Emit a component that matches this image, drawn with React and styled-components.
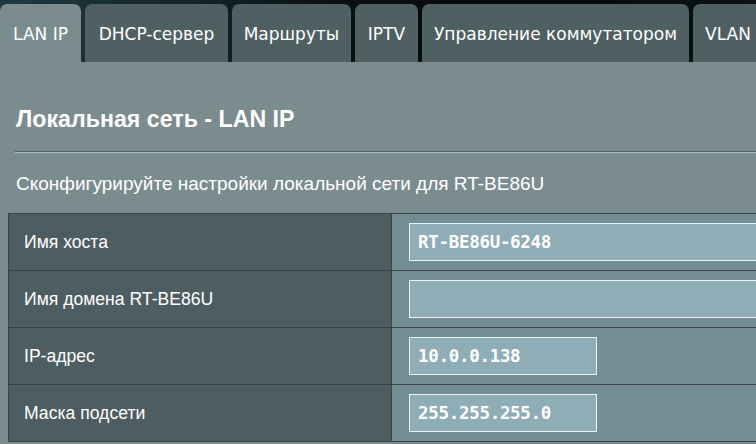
import React from "react";
import styled, { createGlobalStyle } from "styled-components";

const Global = createGlobalStyle`
  html, body { margin: 0; padding: 0; }
  body {
    width: 756px;
    height: 444px;
    overflow: hidden;
    background: #7b8c8f;
    font-family: "Liberation Sans", Arial, sans-serif;
  }
`;

const Page = styled.div`
  width: 756px;
  height: 444px;
  overflow: hidden;
  background: #7b8c8f;
`;

const TabBar = styled.div`
  display: flex;
  gap: 4px;
  padding-top: 4px;
  background: linear-gradient(90deg, #1e3a41 0%, #16292e 20%, #0a1013 45%, #050708 70%, #0c1214 100%);
`;

const Tab = styled.div`
  box-sizing: border-box;
  flex: 0 0 ${(p) => p.$w}px;
  height: 58px;
  display: flex;
  align-items: center;
  justify-content: center;
  border-radius: 7px 7px 0 0;
  background: ${(p) => (p.$active ? "#7b8c8f" : "#4f5f62")};
  color: #ffffff;
  font-family: "DejaVu Sans", Verdana, sans-serif;
  font-size: 17px;
  white-space: nowrap;
  padding-top: 2px;
`;

const Content = styled.div`
  width: 820px;
  padding: 0 0 0 8px;
`;

const Heading = styled.h1`
  margin: 0;
  padding: 43px 0 0 8px;
  height: 46px;
  font-size: 23.2px;
  font-weight: bold;
  color: #ffffff;
  line-height: 28px;
`;

const Rule = styled.div`
  margin: 0 0 0 7px;
  height: 1px;
  background: #505f62;
  border-bottom: 1px solid #a9bfc8;
`;

const Desc = styled.p`
  margin: 0;
  padding: 20px 0 0 8px;
  height: 40px;
  font-size: 19px;
  line-height: 22px;
  color: #ffffff;
`;

const Table = styled.div`
  display: grid;
  grid-template-columns: 383px 1fr;
  border-top: 1px solid #3b4244;
  border-left: 1px solid #3b4244;
`;

const Label = styled.div`
  height: 56px;
  display: flex;
  align-items: center;
  padding-left: 15px;
  background: #4d5d61;
  border-right: 1px solid #3b4244;
  border-bottom: 1px solid #3b4244;
  color: #ffffff;
  font-size: 17.6px;
`;

const Cell = styled.div`
  height: 56px;
  display: flex;
  align-items: center;
  padding-left: 17px;
  background: #728e94;
  border-bottom: 1px solid #3b4244;
`;

const Input = styled.div`
  box-sizing: border-box;
  width: ${(p) => (p.$short ? "188px" : "420px")};
  height: 38px;
  background: #8fadb6;
  border: 1px solid #e6f4f6;
  display: flex;
  align-items: center;
  padding-left: 8px;
  color: #ffffff;
  font-family: "DejaVu Sans Mono", "Liberation Mono", monospace;
  font-size: 17.5px;
  font-weight: bold;
  letter-spacing: -0.3px;
`;

const tabs = [
  { label: "LAN IP", w: 81, active: true },
  { label: "DHCP-сервер", w: 143 },
  { label: "Маршруты", w: 119 },
  { label: "IPTV", w: 63 },
  { label: "Управление коммутатором", w: 267 },
  { label: "VLAN", w: 70 },
];

const rows = [
  { label: "Имя хоста", value: "RT-BE86U-6248" },
  { label: "Имя домена RT-BE86U", value: "" },
  { label: "IP-адрес", value: "10.0.0.138", short: true },
  { label: "Маска подсети", value: "255.255.255.0", short: true },
];

export default function App() {
  return (
    <Page>
      <Global />
      <TabBar>
        {tabs.map((t) => (
          <Tab key={t.label} $w={t.w} $active={t.active}>
            {t.label}
          </Tab>
        ))}
      </TabBar>
      <Content>
        <Heading>Локальная сеть - LAN IP</Heading>
        <Rule />
        <Desc>Сконфигурируйте настройки локальной сети для RT-BE86U</Desc>
        <Table>
          {rows.map((r) => (
            <React.Fragment key={r.label}>
              <Label>{r.label}</Label>
              <Cell>
                <Input $short={r.short}>{r.value}</Input>
              </Cell>
            </React.Fragment>
          ))}
        </Table>
      </Content>
    </Page>
  );
}
